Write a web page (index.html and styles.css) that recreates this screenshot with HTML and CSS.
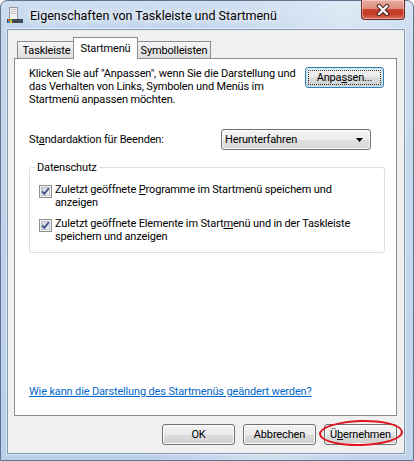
FILE: index.html
```html
<!DOCTYPE html>
<html lang="de">
<head>
    <meta charset="UTF-8">
    <title>Eigenschaften von Taskleiste und Startmenü</title>
    <link rel="stylesheet" href="styles.css">
</head>
<body>

    <div class="window">
        <!-- Title bar -->
        <div class="titlebar">
            <svg class="app-icon" width="16" height="16" viewBox="0 0 16 16">
                <rect x="2.5" y="0.5" width="8" height="12" fill="#f3f3f3" stroke="#9a9a9a"/>
                <rect x="3.5" y="2" width="6" height="1" fill="#c4c4c4"/>
                <rect x="3.5" y="4" width="6" height="1" fill="#c4c4c4"/>
                <rect x="3.5" y="6" width="6" height="1" fill="#c4c4c4"/>
                <rect x="0" y="12" width="16" height="4" fill="#3f4a55"/>
                <rect x="1" y="12" width="2" height="2" fill="#e8562a"/>
                <rect x="3" y="12" width="2" height="2" fill="#7cbb2c"/>
                <rect x="1" y="14" width="2" height="2" fill="#2a8ee8"/>
                <rect x="3" y="14" width="2" height="2" fill="#f3c21a"/>
            </svg>
            <span class="title">Eigenschaften von Taskleiste und Startmenü</span>
            <div class="close">
                <svg width="14" height="12" viewBox="0 0 14 12">
                    <path d="M3 2 L11 10 M11 2 L3 10" stroke="#4a2620" stroke-width="4.4" stroke-linecap="round"/>
                    <path d="M3 2 L11 10 M11 2 L3 10" stroke="#ffffff" stroke-width="2.4" stroke-linecap="round"/>
                </svg>
            </div>
        </div>

        <!-- Client area -->
        <div class="client">
            <div class="tabs">
                <div class="tab tab-taskbar">Taskleiste</div>
                <div class="tab tab-start active">Startmenü</div>
                <div class="tab tab-toolbars">Symbolleisten</div>
            </div>

            <div class="panel">
                <div class="intro">
                    <p>Klicken Sie auf "Anpassen", wenn Sie die Darstellung und<br>das Verhalten von Links, Symbolen und Menüs im<br>Startmenü anpassen möchten.</p>
                    <button class="btn btn-default">Anpa<u>s</u>sen...</button>
                </div>

                <div class="row">
                    <span class="row-label">St<u>a</u>ndardaktion für Beenden:</span>
                    <div class="select">
                        <span>Herunterfahren</span>
                        <svg width="7" height="4" viewBox="0 0 7 4"><path d="M0 0 H7 L3.5 4 Z" fill="#000"/></svg>
                    </div>
                </div>

                <fieldset class="group">
                    <legend>Datenschutz</legend>
                    <div class="check">
                        <svg class="box" width="13" height="13" viewBox="0 0 13 13">
                            <defs>
                                <linearGradient id="cb1" x1="0" y1="0" x2="1" y2="1">
                                    <stop offset="0" stop-color="#cdd0d6"/>
                                    <stop offset="1" stop-color="#f7f7f7"/>
                                </linearGradient>
                            </defs>
                            <rect x="0.5" y="0.5" width="12" height="12" fill="#f4f4f4" stroke="#8e8f8f"/>
                            <rect x="2.5" y="2.5" width="8" height="8" fill="url(#cb1)" stroke="#bfc2c7"/>
                            <path d="M3.2 6.4 L5.4 8.8 L9.8 3.2" fill="none" stroke="#3b4f8e" stroke-width="1.8"/>
                        </svg>
                        <span>Zuletzt geöffnete <u>P</u>rogramme im Startmenü speichern und<br>anzeigen</span>
                    </div>
                    <div class="check">
                        <svg class="box" width="13" height="13" viewBox="0 0 13 13">
                            <defs>
                                <linearGradient id="cb2" x1="0" y1="0" x2="1" y2="1">
                                    <stop offset="0" stop-color="#cdd0d6"/>
                                    <stop offset="1" stop-color="#f7f7f7"/>
                                </linearGradient>
                            </defs>
                            <rect x="0.5" y="0.5" width="12" height="12" fill="#f4f4f4" stroke="#8e8f8f"/>
                            <rect x="2.5" y="2.5" width="8" height="8" fill="url(#cb2)" stroke="#bfc2c7"/>
                            <path d="M3.2 6.4 L5.4 8.8 L9.8 3.2" fill="none" stroke="#3b4f8e" stroke-width="1.8"/>
                        </svg>
                        <span>Zuletzt geöffnete Elemente im Start<u>m</u>enü und in der Taskleiste<br>speichern und anzeigen</span>
                    </div>
                </fieldset>

                <a class="help" href="#">Wie kann die Darstellung des Startmenüs geändert werden?</a>
            </div>

            <!-- Dialog buttons -->
            <div class="buttons">
                <button class="btn">OK</button>
                <button class="btn">Abbrechen</button>
                <div class="marked">
                    <button class="btn">Ü<u>b</u>ernehmen</button>
                    <span class="ring"></span>
                </div>
            </div>
        </div>
    </div>

</body>
</html>
```

FILE: styles.css
```css
* {
    box-sizing: border-box;
}
body {
    margin: 0;
    background: #ffffff;
    font-family: Roboto, "Liberation Sans", sans-serif;
    font-size: 11px;
    line-height: 13px;
    letter-spacing: -0.15px;
    color: #000;
}
u {
    text-decoration-thickness: 1px;
    text-underline-offset: 1px;
}

/* Window frame */
.window {
    width: 414px;
    height: 461px;
    display: flex;
    flex-direction: column;
    padding: 0 8px 6px 6px;
    border: 1px solid #5f748e;
    border-radius: 7px 7px 0 0;
    background:
        linear-gradient(100deg, rgba(255,255,255,0) 45%, rgba(255,255,255,0.35) 70%, rgba(255,255,255,0.1) 90%),
        linear-gradient(180deg, #cfdef0 0%, #c3d7ed 28px, #b9cfe8 100%);
}
.titlebar {
    height: 28px;
    display: flex;
    align-items: flex-start;
    flex-shrink: 0;
}
.app-icon {
    margin-top: 6px;
    flex-shrink: 0;
}
.title {
    margin: 7px 0 0 7px;
    font-size: 12.5px;
    line-height: 15px;
    letter-spacing: 0;
    text-shadow: 0 0 6px #ffffff, 0 0 10px rgba(255,255,255,0.9);
}
.close {
    margin: -1px 0 0 auto;
    width: 44px;
    height: 20px;
    display: flex;
    align-items: center;
    justify-content: center;
    border: 1px solid #6e2a22;
    border-top: none;
    border-radius: 0 0 4px 4px;
    background: linear-gradient(180deg, #e9ab9e 0%, #dc8f7e 45%, #c8412f 50%, #c23b29 75%, #d9735f 100%);
    box-shadow: inset 0 0 0 1px rgba(255,255,255,0.35);
}

/* Client area */
.client {
    flex: 1;
    display: flex;
    flex-direction: column;
    padding: 7px 7px 0 6px;
    border: 1px solid #8397ae;
    background: #f0f0f0;
    box-shadow: 0 0 0 1px rgba(255,255,255,0.5);
}
.tabs {
    display: flex;
    align-items: flex-end;
    padding-left: 3px;
    margin-bottom: -1px;
    position: relative;
    z-index: 1;
}
.tab {
    height: 18px;
    display: flex;
    align-items: center;
    justify-content: center;
    border: 1px solid #898c95;
    background: linear-gradient(180deg, #f6f6f6 0%, #e9e9e9 50%, #dedede 100%);
}
.tab-taskbar {
    width: 58px;
    border-right: none;
}
.tab-start {
    width: 65px;
    margin: 0 -2px;
}
.tab-toolbars {
    width: 75px;
    border-left: none;
    padding-left: 2px;
}
.tab.active {
    height: 22px;
    border-bottom: none;
    border-left: 1px solid #898c95;
    border-right: 1px solid #898c95;
    background: #ffffff;
    padding-bottom: 1px;
    position: relative;
    z-index: 2;
}
.panel {
    height: 358px;
    display: flex;
    flex-direction: column;
    padding: 8px 12px 17px 14px;
    border: 1px solid #898c95;
    background: #ffffff;
}
.intro {
    display: flex;
    justify-content: space-between;
    align-items: flex-start;
}
.intro p {
    margin: 0;
}
.row {
    display: flex;
    align-items: center;
    margin-top: 23px;
}
.row-label {
    width: 192px;
}
.select {
    width: 150px;
    height: 21px;
    display: flex;
    align-items: center;
    justify-content: space-between;
    padding: 0 7px 0 3px;
    border: 1px solid #707070;
    border-radius: 3px;
    background: linear-gradient(180deg, #f4f4f4 0%, #ececec 50%, #e0e0e0 50%, #d6d6d6 100%);
    box-shadow: inset 0 0 0 1px #fbfbfb;
}
.group {
    margin: 11px -1px 0 0;
    min-width: 0;
    padding: 9px 8px 9px 5px;
    border: 1px solid #d5dfe5;
    border-radius: 3px;
}
.group legend {
    padding: 0 2px;
}
.check {
    display: flex;
    align-items: flex-start;
    gap: 3px;
    padding-left: 4px;
}
.check + .check {
    margin-top: 8px;
}
.check .box {
    flex-shrink: 0;
    margin-top: 2px;
}
.help {
    margin-top: auto;
    color: #0066cc;
    text-decoration: underline;
    text-underline-offset: 1px;
}

/* Buttons */
.btn {
    width: 73px;
    height: 21px;
    padding: 0;
    font: inherit;
    letter-spacing: inherit;
    color: #000;
    border: 1px solid #707070;
    border-radius: 3px;
    background: linear-gradient(180deg, #f2f2f2 0%, #ebebeb 50%, #dddddd 50%, #cfcfcf 100%);
    box-shadow: inset 0 0 0 1px #fcfcfc;
}
.btn-default {
    width: 79px;
    border-color: #3c7fb1;
    box-shadow: inset 0 0 0 1px #bde4f7;
    outline: 1px dotted #333;
    outline-offset: -4px;
}
.buttons {
    display: flex;
    justify-content: flex-end;
    gap: 8px;
    margin-top: 8px;
}
.marked {
    position: relative;
    display: flex;
}
.ring {
    position: absolute;
    left: -5px;
    top: -4px;
    width: 84px;
    height: 26px;
    border: 2px solid #e0141c;
    border-radius: 50%;
    transform: rotate(-1.5deg);
}
```
